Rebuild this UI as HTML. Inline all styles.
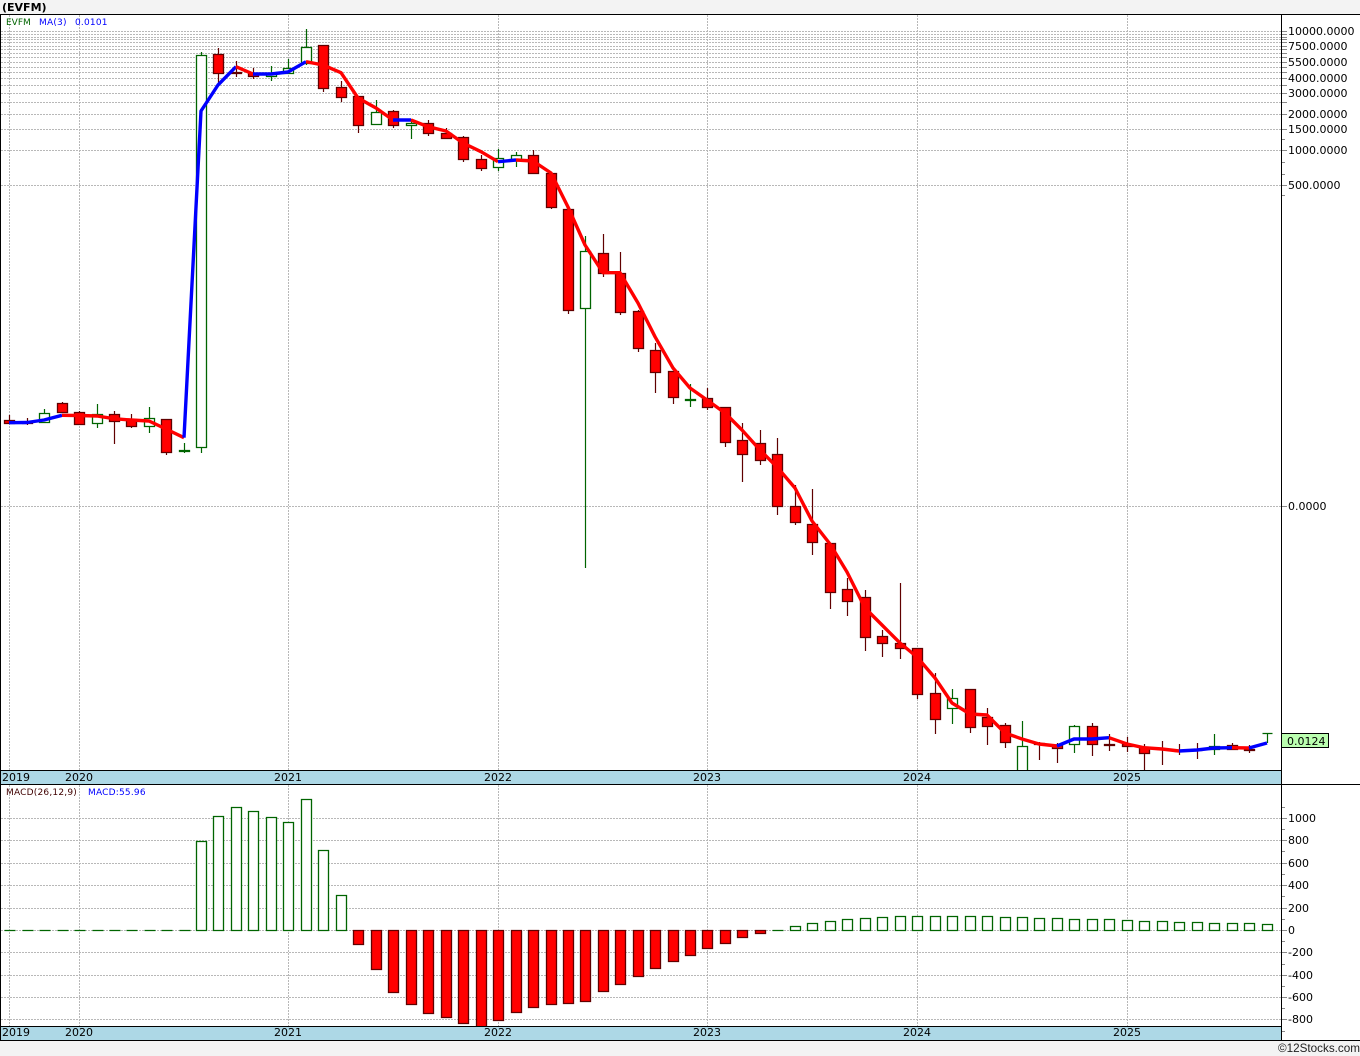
<!DOCTYPE html>
<html><head><meta charset="utf-8"><title>EVFM</title>
<style>
html,body{margin:0;padding:0;background:#f3f3f3;width:1360px;height:1056px;overflow:hidden}
svg{display:block;position:absolute;left:0;top:0}
text{font-family:"DejaVu Sans","Liberation Sans",sans-serif;font-size:11px;fill:#000}
.l{font-size:9px;letter-spacing:.2px}
.g path{fill:none;stroke:#b8b8b8;stroke-width:1;stroke-dasharray:2 1;shape-rendering:crispEdges}
.k{stroke:#000;stroke-width:1;fill:none;shape-rendering:crispEdges}
.t{stroke:#888;stroke-width:1;fill:none;shape-rendering:crispEdges}
.rw{stroke:#600000;stroke-width:1.2;fill:none}
.gw{stroke:#006400;stroke-width:1.2;fill:none}
.rb{stroke:#600000;stroke-width:1.3;fill:#f00}
.gb{stroke:#006400;stroke-width:1.3;fill:#fff}
.mr,.mb{fill:none;stroke-width:3.4;stroke-linejoin:round;stroke-linecap:butt}
.mr{stroke:#f00}.mb{stroke:#00f}
</style></head><body>
<svg width="1360" height="1056" viewBox="0 0 1360 1056" xmlns="http://www.w3.org/2000/svg">
<rect x="0" y="0" width="1360" height="1056" fill="#f3f3f3"/>
<rect x="0" y="14" width="1360" height="1026" fill="#fff"/>
<text x="2" y="11" font-weight="bold" style="font-weight:bold">(EVFM)</text>

<g class="g">
<path d="M1 31.5H1281M1 34.5H1281M1 37.5H1281M1 39.5H1281M1 42.5H1281M1 46.5H1281M1 49.5H1281M1 53.5H1281M1 57.5H1281M1 62.5H1281M1 67.5H1281M1 72.5H1281M1 78.5H1281M1 85.5H1281M1 93.5H1281M1 102.5H1281M1 114.5H1281M1 129.5H1281M1 150.5H1281M1 185.5H1281M1 506.5H1281"/>
<path d="M9.5 15V770M79.5 15V770M288.5 15V770M498.5 15V770M707.5 15V770M917.5 15V770M1127.5 15V770"/>
<path d="M1 818.5H1281M1 840.5H1281M1 863.5H1281M1 885.5H1281M1 908.5H1281M1 930.5H1281M1 952.5H1281M1 975.5H1281M1 997.5H1281M1 1019.5H1281"/>
<path d="M9.5 785V1026M79.5 785V1026M288.5 785V1026M498.5 785V1026M707.5 785V1026M917.5 785V1026M1127.5 785V1026"/>
</g>

<path class="rw" d="M9.5 415V424M27.5 418V425M62.5 402V412M79.5 411V425M114.5 411V444M131.5 414V428M166.5 419V455M218.5 48V83M236.5 61V77M253.5 68V79M323.5 45V92M341.5 81V102M358.5 96V133M393.5 110V128M428.5 120V136M446.5 128V138M463.5 136V162M481.5 155V171M533.5 150V173M551.5 173V209M568.5 209V314M603.5 234V277M620.5 252V315M638.5 310V352M655.5 343V393M673.5 371V404M707.5 388V410M725.5 407V447M742.5 423V482M760.5 430V465M777.5 438V515M795.5 485V525M812.5 489V555M830.5 543V609M847.5 578V616M865.5 590V651M882.5 630V657M900.5 583V659M917.5 648V699M935.5 673V734M970.5 689V733M987.5 708V745M1005.5 723V748M1039.5 742V760M1057.5 743V763M1092.5 723V756M1109.5 734V751M1127.5 737V752M1144.5 744V770M1162.5 741V765M1179.5 744V755M1197.5 743V759M1232.5 743V749M1249.5 745V753"/>
<path class="gw" d="M44.5 409V423M97.5 404V428M149.5 407V433M184.5 443V453M201.5 52V453M271.5 66V81M288.5 59V73M306.5 29V65M376.5 100V124M411.5 119V139M498.5 149V171M516.5 152V167M585.5 236V568M690.5 384V407M952.5 689V724M1022.5 721V770M1074.5 725V753M1214.5 734V755M1267.5 733V743"/>

<path class="rb" d="M4.5 420.5h10v3h-10zM22.5 422.5h10v1h-10zM57.5 403.5h10v9h-10zM74.5 412.5h10v12h-10zM109.5 414.5h10v7h-10zM126.5 419.5h10v7h-10zM161.5 419.5h10v33h-10zM213.5 54.5h10v19h-10zM231.5 72.5h10v1h-10zM248.5 73.5h10v3h-10zM318.5 45.5h10v43h-10zM336.5 87.5h10v10h-10zM353.5 96.5h10v29h-10zM388.5 111.5h10v14h-10zM423.5 123.5h10v10h-10zM441.5 133.5h10v5h-10zM458.5 137.5h10v22h-10zM476.5 159.5h10v9h-10zM528.5 155.5h10v18h-10zM546.5 173.5h10v34h-10zM563.5 209.5h10v101h-10zM598.5 253.5h10v20h-10zM615.5 273.5h10v39h-10zM633.5 311.5h10v37h-10zM650.5 350.5h10v22h-10zM668.5 371.5h10v26h-10zM702.5 398.5h10v9h-10zM720.5 407.5h10v35h-10zM737.5 440.5h10v14h-10zM755.5 443.5h10v17h-10zM772.5 454.5h10v52h-10zM790.5 506.5h10v16h-10zM807.5 524.5h10v18h-10zM825.5 543.5h10v49h-10zM842.5 589.5h10v12h-10zM860.5 597.5h10v40h-10zM877.5 636.5h10v7h-10zM895.5 643.5h10v5h-10zM912.5 648.5h10v46h-10zM930.5 693.5h10v26h-10zM965.5 689.5h10v38h-10zM982.5 717.5h10v9h-10zM1000.5 725.5h10v17h-10zM1034.5 743.5h10v1h-10zM1052.5 745.5h10v3h-10zM1087.5 726.5h10v18h-10zM1104.5 744.5h10v1h-10zM1122.5 744.5h10v2h-10zM1139.5 747.5h10v6h-10zM1157.5 749.5h10M1174.5 751.5h10M1192.5 750.5h10M1227.5 745.5h10v4h-10zM1244.5 749.5h10v1h-10z"/>
<path class="gb" d="M39.5 413.5h10v9h-10zM92.5 414.5h10v9h-10zM144.5 418.5h10v8h-10zM179.5 450.5h10v1h-10zM196.5 55.5h10v392h-10zM266.5 73.5h10v3h-10zM283.5 68.5h10v5h-10zM301.5 47.5h10v16h-10zM371.5 112.5h10v12h-10zM406.5 123.5h10v2h-10zM493.5 158.5h10v9h-10zM511.5 155.5h10v4h-10zM580.5 251.5h10v57h-10zM685.5 399.5h10v1h-10zM947.5 698.5h10v10h-10zM1017.5 746.5h10v26h-10zM1069.5 726.5h10v18h-10zM1209.5 746.5h10v3h-10zM1262.5 733.5h10"/>

<polyline class="mb" points="9,422.7 27,422.5 44,420 62,415.3"/>
<polyline class="mr" points="62,415.3 79,415.5 97,416 114,418.7 131,420 149,421 166,429 184,437.7"/>
<polyline class="mb" points="184,437.7 201,111 218,85 236,66.7"/>
<polyline class="mr" points="236,66.7 253,74"/>
<polyline class="mb" points="253,74 271,74 288,72 306,61.7"/>
<polyline class="mr" points="306,61.7 323,65 341,72.7 358,98 376,108 393,120"/>
<polyline class="mb" points="393,120 411,120"/>
<polyline class="mr" points="411,120 428,126.7 446,131 463,143 481,151.7 498,161.7"/>
<polyline class="mb" points="498,161.7 516,160"/>
<polyline class="mr" points="516,160 533,161 551,173 568,207 585,245 603,272.7 620,272.7 638,303 655,336.7 673,368 690,388 707,400 725,413 742,430 760,450 777,467 795,488 812,521 830,544 847,572 865,608 882,625 900,643 917,657 935,678 952,703 970,714 987,715 1005,733 1022,739 1039,744 1057,746"/>
<polyline class="mb" points="1057,746 1074,739 1092,739 1109,737.7"/>
<polyline class="mr" points="1109,737.7 1127,744 1144,747.7 1162,749 1179,751"/>
<polyline class="mb" points="1179,751 1197,750 1214,748 1232,747.7"/>
<polyline class="mr" points="1232,747.7 1249,748"/>
<polyline class="mb" points="1249,748 1267,743"/>

<path class="gw" d="M4.5 930.5h11M22.5 930.5h11M39.5 930.5h11M57.5 930.5h11M74.5 930.5h11M92.5 930.5h11M109.5 930.5h11M126.5 930.5h11M144.5 930.5h11M161.5 930.5h11M179.5 930.5h11M772.5 930.5h11"/>
<path class="gb" d="M196.5 841.5h10v89h-10zM213.5 816.5h10v114h-10zM231.5 807.5h10v123h-10zM248.5 811.5h10v119h-10zM266.5 817.5h10v113h-10zM283.5 822.5h10v108h-10zM301.5 799.5h10v131h-10zM318.5 850.5h10v80h-10zM336.5 895.5h10v35h-10zM790.5 926.5h10v4h-10zM807.5 923.5h10v7h-10zM825.5 921.5h10v9h-10zM842.5 919.5h10v11h-10zM860.5 918.5h10v12h-10zM877.5 917.5h10v13h-10zM895.5 916.5h10v14h-10zM912.5 916.5h10v14h-10zM930.5 916.5h10v14h-10zM947.5 916.5h10v14h-10zM965.5 916.5h10v14h-10zM982.5 916.5h10v14h-10zM1000.5 917.5h10v13h-10zM1017.5 917.5h10v13h-10zM1034.5 918.5h10v12h-10zM1052.5 918.5h10v12h-10zM1069.5 919.5h10v11h-10zM1087.5 919.5h10v11h-10zM1104.5 919.5h10v11h-10zM1122.5 920.5h10v10h-10zM1139.5 921.5h10v9h-10zM1157.5 921.5h10v9h-10zM1174.5 922.5h10v8h-10zM1192.5 922.5h10v8h-10zM1209.5 923.5h10v7h-10zM1227.5 923.5h10v7h-10zM1244.5 923.5h10v7h-10zM1262.5 924.5h10v6h-10z"/>
<path class="rb" d="M353.5 930.5h10v14h-10zM371.5 930.5h10v39h-10zM388.5 930.5h10v62h-10zM406.5 930.5h10v74h-10zM423.5 930.5h10v83h-10zM441.5 930.5h10v87h-10zM458.5 930.5h10v93h-10zM476.5 930.5h10v98h-10zM493.5 930.5h10v90h-10zM511.5 930.5h10v82h-10zM528.5 930.5h10v77h-10zM546.5 930.5h10v74h-10zM563.5 930.5h10v73h-10zM580.5 930.5h10v71h-10zM598.5 930.5h10v61h-10zM615.5 930.5h10v54h-10zM633.5 930.5h10v46h-10zM650.5 930.5h10v38h-10zM668.5 930.5h10v31h-10zM685.5 930.5h10v25h-10zM702.5 930.5h10v18h-10zM720.5 930.5h10v13h-10zM737.5 930.5h10v7h-10zM755.5 930.5h10v3h-10z"/>

<rect x="0" y="770" width="1281" height="14" fill="#add8e6"/>
<rect x="0" y="1026" width="1281" height="14" fill="#add8e6"/>
<rect x="1282" y="15" width="78" height="1025" fill="#fff"/>

<path class="k" d="M0 14.5H1360M0.5 14V1040M1281.5 14V1040M0 770.5H1281M0 784.5H1360M0 1026.5H1281M0 1040.5H1360"/>
<path class="t" d="M1282 31.5h5M1282 34.5h5M1282 37.5h5M1282 39.5h5M1282 42.5h5M1282 46.5h5M1282 49.5h5M1282 53.5h5M1282 57.5h5M1282 62.5h5M1282 67.5h5M1282 72.5h5M1282 78.5h5M1282 85.5h5M1282 93.5h5M1282 102.5h5M1282 114.5h5M1282 129.5h5M1282 139.5h3M1282 150.5h5M1282 162.5h3M1282 174.5h3M1282 185.5h5M1282 195.5h3M1282 506.5h5M1282 807.5h3M1282 818.5h5M1282 829.5h3M1282 840.5h5M1282 851.5h3M1282 863.5h5M1282 874.5h3M1282 885.5h5M1282 896.5h3M1282 908.5h5M1282 919.5h3M1282 930.5h5M1282 941.5h3M1282 952.5h5M1282 964.5h3M1282 975.5h5M1282 986.5h3M1282 997.5h5M1282 1008.5h3M1282 1019.5h5M1282 1031.5h3"/>

<g>
<text x="1288" y="35">10000.0000</text>
<text x="1288" y="50">7500.0000</text>
<text x="1288" y="66">5500.0000</text>
<text x="1288" y="82">4000.0000</text>
<text x="1288" y="97">3000.0000</text>
<text x="1288" y="118">2000.0000</text>
<text x="1288" y="133">1500.0000</text>
<text x="1288" y="154">1000.0000</text>
<text x="1288" y="189">500.0000</text>
<text x="1288" y="510">0.0000</text>
<text x="1288" y="822">1000</text>
<text x="1288" y="844">800</text>
<text x="1288" y="867">600</text>
<text x="1288" y="889">400</text>
<text x="1288" y="912">200</text>
<text x="1288" y="934">0</text>
<text x="1288" y="956">-200</text>
<text x="1288" y="979">-400</text>
<text x="1288" y="1001">-600</text>
<text x="1288" y="1023">-800</text>
</g>

<rect x="1281.5" y="733.5" width="47" height="14" fill="#bbffb0" stroke="#000" stroke-width="1" shape-rendering="crispEdges"/>
<text x="1287" y="745">0.0124</text>

<g>
<text x="2" y="781">2019</text>
<text x="65" y="781">2020</text>
<text x="274" y="781">2021</text>
<text x="484" y="781">2022</text>
<text x="693" y="781">2023</text>
<text x="903" y="781">2024</text>
<text x="1113" y="781">2025</text>
<text x="2" y="1036">2019</text>
<text x="65" y="1036">2020</text>
<text x="274" y="1036">2021</text>
<text x="484" y="1036">2022</text>
<text x="693" y="1036">2023</text>
<text x="903" y="1036">2024</text>
<text x="1113" y="1036">2025</text>
</g>

<text class="l" x="6" y="25" style="fill:#006400;letter-spacing:0">EVFM</text>
<text class="l" x="39" y="25" style="fill:#0000ff">MA(3)</text>
<text class="l" x="75" y="25" style="fill:#0000ff">0.0101</text>
<text class="l" x="6" y="795" style="fill:#400000">MACD(26,12,9)</text>
<text class="l" x="88" y="795" style="fill:#0000ff">MACD:55.96</text>

<text x="1360" y="1052" text-anchor="end" style="font-family:'Liberation Sans',sans-serif;font-size:11.7px;fill:#222">©12Stocks.com</text>
</svg>
</body></html>
